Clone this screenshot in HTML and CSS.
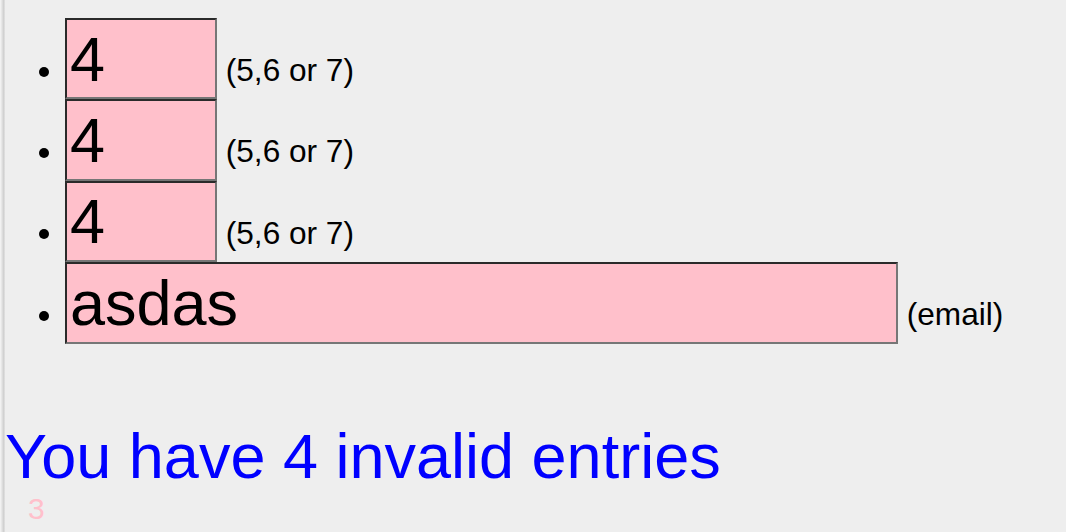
FILE: index.html
```html
<!DOCTYPE html>
<html lang="en">
<head>
<meta charset="utf-8">
<title>Validation</title>
<link rel="stylesheet" href="styles.css">
</head>
<body>
<div class="page">
  <ul class="fields">
    <li class="row"><input class="field short" type="text" value="4"> <span class="hint">(5,6 or 7)</span></li>
    <li class="row"><input class="field short" type="text" value="4"> <span class="hint">(5,6 or 7)</span></li>
    <li class="row"><input class="field short" type="text" value="4"> <span class="hint">(5,6 or 7)</span></li>
    <li class="row"><input class="field long" type="text" value="asdas"> <span class="hint">(email)</span></li>
  </ul>
  <h1 class="status">You have 4 invalid entries</h1>
  <div class="count">3</div>
</div>
</body>
</html>
```

FILE: styles.css
```css
html, body {
  margin: 0;
  padding: 0;
  background: #eeeeee;
  height: 100%;
}

.page {
  min-height: 100%;
  box-sizing: border-box;
  padding-left: 5px;
  font-family: "Liberation Sans", Arial, sans-serif;
  font-size: 31.6px;
  color: #000;
  background:
    linear-gradient(to right, #f6f6f6 0px, #e2e2e2 2px, #cbcbcb 4px, #eeeeee 5px) left top / 5px 100% no-repeat,
    #eeeeee;
}

.fields {
  margin: 0;
  padding: 18px 0 0 60px;
  list-style: disc;
}

.row {
  line-height: normal;
}

.field {
  box-sizing: border-box;
  height: 81.4px;
  margin: 0;
  padding: 1px 2px 1px 3px;
  font-family: "Liberation Sans", Arial, sans-serif;
  font-size: 63px;
  color: #000;
  background: #ffc0cb;
  border-style: solid;
  border-width: 2px;
  border-color: #2a2a2a #767676 #767676 #2a2a2a;
  vertical-align: baseline;
  outline: none;
}

.short {
  width: 152px;
}

.long {
  width: 833px;
}

.hint {
  font-size: 31.6px;
}

.status {
  margin: 76px 0 0 0;
  font-size: 63px;
  font-weight: normal;
  line-height: normal;
  color: #0000ff;
}

.count {
  padding-left: 23px;
  font-size: 30px;
  line-height: normal;
  color: #ffc0cb;
}
```
